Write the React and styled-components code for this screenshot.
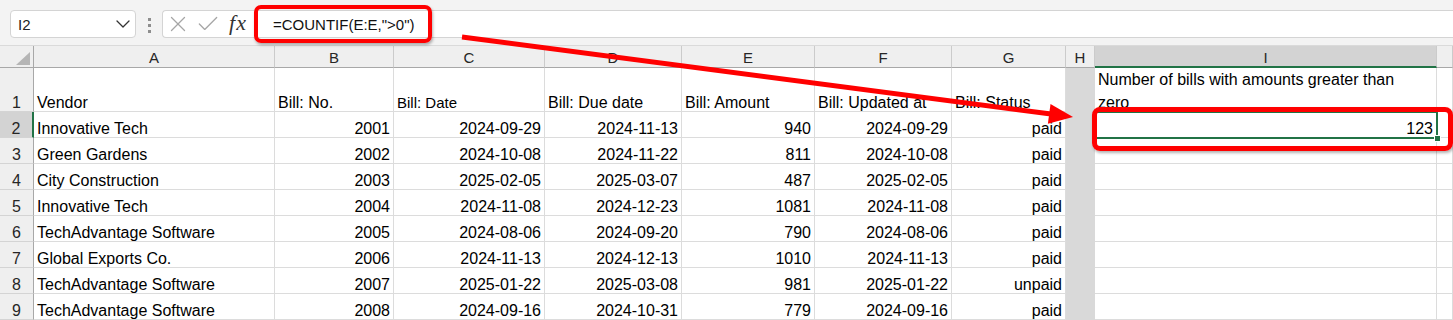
import React from "react";
import styled, { createGlobalStyle } from "styled-components";
import { ChevronDown, X, Check } from "lucide-react";

const GlobalStyle = createGlobalStyle`
  html, body {
    margin: 0;
    padding: 0;
    background: #ffffff;
    font-family: "Liberation Sans", Arial, sans-serif;
  }
`;

const GREEN = "#217346";
const RED = "#ff0000";

const Frame = styled.div`
  position: relative;
  width: 1453px;
  height: 320px;
  overflow: hidden;
  background: #ffffff;
`;

/* ---------- formula bar ---------- */

const FormulaBar = styled.div`
  height: 46px;
  box-sizing: border-box;
  display: flex;
  align-items: flex-start;
  padding: 10px 0 0 10px;
  background: #f3f3f3;
  border-bottom: 1px solid #dadada;
`;

const NameBox = styled.div`
  width: 126px;
  height: 28px;
  box-sizing: border-box;
  display: flex;
  align-items: center;
  justify-content: space-between;
  padding-left: 7px;
  background: #ffffff;
  border: 1px solid #d4d4d4;
  border-radius: 4px;
  font-size: 15px;
  color: #222;
`;

const Grip = styled.div`
  display: flex;
  flex-direction: column;
  gap: 3px;
  margin: 8px 11px 0 12px;
`;

const Dot = styled.span`
  width: 3px;
  height: 3px;
  background: #8e8e8e;
`;

const FormulaField = styled.div`
  flex: 1;
  height: 28px;
  box-sizing: border-box;
  display: flex;
  align-items: center;
  background: #ffffff;
  border: 1px solid #d4d4d4;
  border-right: none;
  border-radius: 4px 0 0 4px;
`;

const FxGroup = styled.div`
  display: grid;
  grid-template-columns: 30px 30px 30px;
  align-items: center;
  justify-items: center;
  color: #a6a6a6;
`;

const FxMark = styled.span`
  font-family: "Liberation Serif", "Times New Roman", serif;
  font-style: italic;
  font-size: 22px;
  line-height: 1;
  color: #333;
  letter-spacing: 1px;
  margin-top: -2px;
`;

const FormulaText = styled.span`
  padding-left: 20px;
  font-size: 15px;
  color: #111;
`;

/* ---------- sheet ---------- */

const Sheet = styled.div`
  display: grid;
  grid-template-columns: 34px 241px 119px 151px 137px 133px 137px 114px 29px 342px 1fr;
  grid-template-rows: 22px 44px repeat(8, 26px);
`;

const Corner = styled.div`
  position: relative;
  background: #efefef;
  border-right: 1px solid #a8a8a8;
  border-bottom: 1px solid #a8a8a8;

  &::after {
    content: "";
    position: absolute;
    right: 3px;
    bottom: 2px;
    width: 14px;
    height: 13px;
    background: #b5b5b5;
    clip-path: polygon(100% 0, 100% 100%, 0 100%);
  }
`;

const ColHeader = styled.div`
  box-sizing: border-box;
  display: flex;
  align-items: center;
  justify-content: center;
  padding-top: 2px;
  font-size: 15px;
  color: #262626;
  background: ${(p) => (p.$active ? "#d3d3d3" : "#efefef")};
  border-right: 1px solid #cbcbcb;
  border-bottom: ${(p) => (p.$active ? `2px solid ${GREEN}` : "1px solid #a8a8a8")};
`;

const RowHeader = styled.div`
  box-sizing: border-box;
  display: flex;
  align-items: flex-end;
  justify-content: center;
  font-size: 16px;
  line-height: ${(p) => (p.$tall ? "17px" : "16px")};
  color: #262626;
  background: ${(p) => (p.$active ? "#d3d3d3" : "#efefef")};
  border-right: ${(p) => (p.$active ? `2px solid ${GREEN}` : "1px solid #a8a8a8")};
  border-bottom: 1px solid #d4d4d4;
`;

const Cell = styled.div`
  position: relative;
  box-sizing: border-box;
  display: flex;
  align-items: ${(p) => (p.$wrap ? "flex-start" : "flex-end")};
  justify-content: ${(p) => (p.$right ? "flex-end" : "flex-start")};
  padding: ${(p) => (p.$wrap ? "1px 8px 0 3px" : "0 3px")};
  overflow: hidden;
  font-size: ${(p) => (p.$small ? "15px" : "16px")};
  line-height: ${(p) => (p.$wrap ? "22.5px" : p.$tall ? "17px" : "16px")};
  white-space: ${(p) => (p.$wrap ? "normal" : "nowrap")};
  color: #000;
  background: ${(p) => (p.$shade ? "#d9d9d9" : "#ffffff")};
  border-right: 1px solid ${(p) => (p.$shade ? "#d9d9d9" : "#dcdcdc")};
  border-bottom: 1px solid ${(p) => (p.$shade ? "#d9d9d9" : "#dcdcdc")};
`;

const SelectedCell = styled(Cell)`
  z-index: 1;
  overflow: visible;
  outline: 2px solid ${GREEN};
  outline-offset: -1px;

  &::after {
    content: "";
    position: absolute;
    right: -5px;
    bottom: -5px;
    width: 5px;
    height: 5px;
    background: ${GREEN};
    border: 1px solid #ffffff;
  }
`;

/* ---------- annotations ---------- */

const Callout = styled.div`
  position: absolute;
  z-index: 5;
  left: ${(p) => p.$x}px;
  top: ${(p) => p.$y}px;
  width: ${(p) => p.$w}px;
  height: ${(p) => p.$h}px;
  box-sizing: border-box;
  border: ${(p) => p.$stroke}px solid ${RED};
  border-radius: ${(p) => p.$radius}px;
  box-shadow: 1px 2px 3px rgba(0, 0, 0, 0.3);
  pointer-events: none;
`;

const ArrowLayer = styled.svg`
  position: absolute;
  z-index: 5;
  left: 0;
  top: 0;
  pointer-events: none;
`;

const columns = ["A", "B", "C", "D", "E", "F", "G", "H", "I", ""];

const bills = [
  ["Innovative Tech", "2001", "2024-09-29", "2024-11-13", "940", "2024-09-29", "paid"],
  ["Green Gardens", "2002", "2024-10-08", "2024-11-22", "811", "2024-10-08", "paid"],
  ["City Construction", "2003", "2025-02-05", "2025-03-07", "487", "2025-02-05", "paid"],
  ["Innovative Tech", "2004", "2024-11-08", "2024-12-23", "1081", "2024-11-08", "paid"],
  ["TechAdvantage Software", "2005", "2024-08-06", "2024-09-20", "790", "2024-08-06", "paid"],
  ["Global Exports Co.", "2006", "2024-11-13", "2024-12-13", "1010", "2024-11-13", "paid"],
  ["TechAdvantage Software", "2007", "2025-01-22", "2025-03-08", "981", "2025-01-22", "unpaid"],
  ["TechAdvantage Software", "2008", "2024-09-16", "2024-10-31", "779", "2024-09-16", "paid"],
];

const headings = [
  { text: "Vendor" },
  { text: "Bill: No." },
  { text: "Bill: Date", small: true },
  { text: "Bill: Due date" },
  { text: "Bill: Amount" },
  { text: "Bill: Updated at" },
  { text: "Bill: Status" },
];

const App = () => {
  return (
    <>
      <GlobalStyle />
      <Frame>
        <FormulaBar>
          <NameBox>
            I2
            <ChevronDown size={24} strokeWidth={1.3} color="#333" />
          </NameBox>
          <Grip>
            <Dot />
            <Dot />
            <Dot />
          </Grip>
          <FormulaField>
            <FxGroup>
              <X size={26} strokeWidth={1.2} />
              <Check size={26} strokeWidth={1.2} />
              <FxMark>fx</FxMark>
            </FxGroup>
            <FormulaText>=COUNTIF(E:E,"&gt;0")</FormulaText>
          </FormulaField>
        </FormulaBar>

        <Sheet>
          <Corner />
          {columns.map((c, i) => (
            <ColHeader key={i} $active={c === "I"}>
              {c}
            </ColHeader>
          ))}

          <RowHeader $tall>1</RowHeader>
          {headings.map((h) => (
            <Cell key={h.text} $tall $small={h.small}>
              {h.text}
            </Cell>
          ))}
          <Cell $tall $shade />
          <Cell $tall $wrap>
            Number of bills with amounts greater than zero
          </Cell>
          <Cell $tall />

          {bills.map((row, r) => (
            <React.Fragment key={r}>
              <RowHeader $active={r === 0}>{r + 2}</RowHeader>
              {row.map((v, c) => (
                <Cell key={c} $right={c > 0}>
                  {v}
                </Cell>
              ))}
              <Cell $shade />
              {r === 0 ? <SelectedCell $right>123</SelectedCell> : <Cell />}
              <Cell />
            </React.Fragment>
          ))}
        </Sheet>

        <Callout $x={254} $y={5} $w={178} $h={38} $stroke={4} $radius={7} />
        <Callout $x={1092} $y={107} $w={361} $h={44} $stroke={5} $radius={8} />

        <ArrowLayer width="1453" height="320" viewBox="0 0 1453 320">
          <line x1="462" y1="37" x2="1051" y2="114.1" stroke={RED} strokeWidth="5" />
          <polygon points="1073,117 1050.5,104 1047.9,123.8" fill={RED} />
        </ArrowLayer>
      </Frame>
    </>
  );
};

export default App;
